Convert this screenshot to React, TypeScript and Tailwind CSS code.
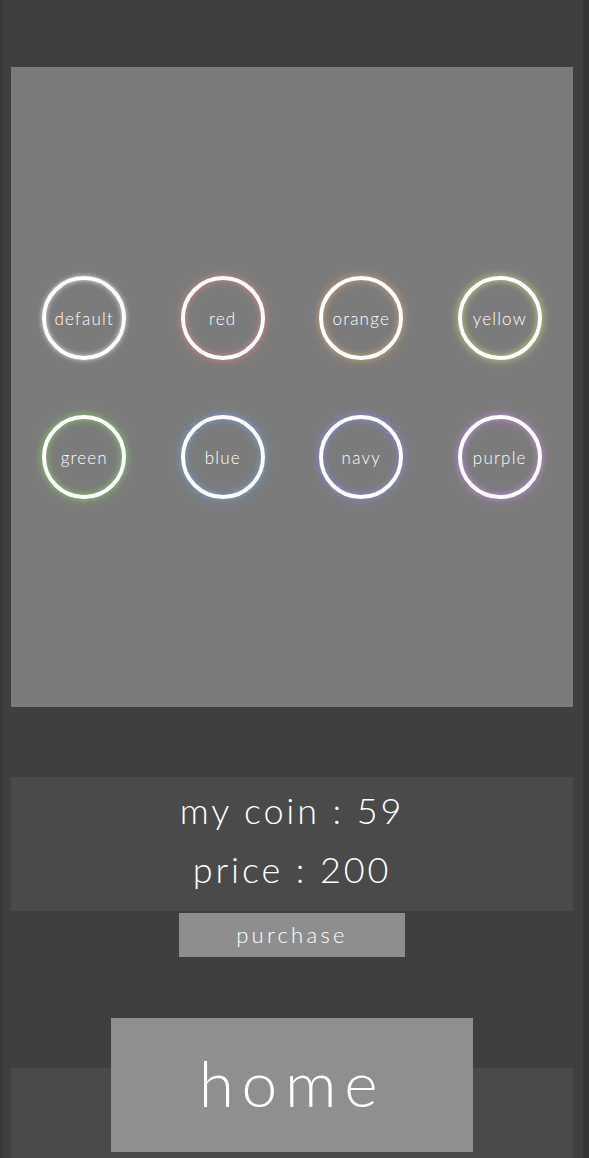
import React from 'react';

interface Skin { name: string; glow: string; }

const skins: Skin[] = [
  { name: 'default', glow: 'shadow-[0_0_5px_#e0e0e0,inset_0_0_5px_#e0e0e0]' },
  { name: 'red', glow: 'shadow-[0_0_8px_#d88484,inset_0_0_7px_#d88484]' },
  { name: 'orange', glow: 'shadow-[0_0_8px_#d0a074,inset_0_0_7px_#d0a074]' },
  { name: 'yellow', glow: 'shadow-[0_0_8px_#cdd07c,inset_0_0_7px_#cdd07c]' },
  { name: 'green', glow: 'shadow-[0_0_8px_#86cc6c,inset_0_0_7px_#86cc6c]' },
  { name: 'blue', glow: 'shadow-[0_0_8px_#789fdc,inset_0_0_7px_#789fdc]' },
  { name: 'navy', glow: 'shadow-[0_0_8px_#8888e6,inset_0_0_7px_#8888e6]' },
  { name: 'purple', glow: 'shadow-[0_0_8px_#bf88e0,inset_0_0_7px_#bf88e0]' },
];

function SkinButton({ skin }: { skin: Skin }) {
  return (
    <div className="flex h-[139px] items-center justify-center">
      <button
        className={`flex h-[84px] w-[84px] items-center justify-center rounded-full border-[4px] border-white pt-[2px] text-[17px] font-light tracking-[0.07em] text-white ${skin.glow}`}
      >
        {skin.name}
      </button>
    </div>
  );
}

export default function App() {
  return (
    <div
      className="flex h-[1158px] w-full overflow-hidden bg-[#3f3f3f]"
      style={{ fontFamily: 'Lato, "Noto Sans", sans-serif' }}
    >
      <div className="flex flex-1 flex-col border-l-[3px] border-[#383838] pl-[8px] pr-[10px]">
        {/* skin picker */}
        <div className="mt-[67px] flex h-[640px] flex-col justify-center bg-[#7b7b7b] px-[4px]">
          <div className="grid grid-cols-4">
            {skins.map((s) => (
              <SkinButton key={s.name} skin={s} />
            ))}
          </div>
        </div>

        {/* coin info */}
        <div className="mt-[70px] flex h-[134px] flex-col items-center justify-center bg-[#4a4a4a] pb-[8px] text-[36px] font-light leading-[59px] tracking-[0.08em] text-white">
          <p>my coin : 59</p>
          <p>price : 200</p>
        </div>
        <button className="mx-auto mt-[2px] h-[44px] w-[226px] bg-[#8e8e8e] pb-[2px] text-[22px] font-light tracking-[0.15em] text-white">
          purchase
        </button>

        {/* home */}
        <div className="relative mt-[61px]">
          <div className="mt-[50px] h-[90px] bg-[#4a4a4a]" />
          <button className="absolute left-1/2 top-0 flex h-[134px] w-[362px] -translate-x-1/2 items-center justify-center bg-[#8f8f8f] pb-[4px] text-[64px] font-light tracking-[0.12em] text-white">
            home
          </button>
        </div>
      </div>
      <div className="w-[6px] border-l-[4px] border-[#363636] bg-[#333333]" />
    </div>
  );
}
